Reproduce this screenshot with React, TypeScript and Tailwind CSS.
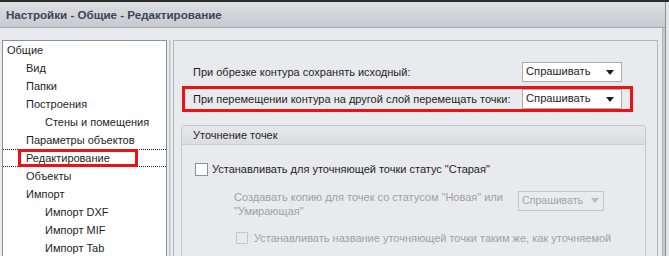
import React from "react";

const font = { fontFamily: '"Liberation Sans", Arial, sans-serif' };

function Dropdown({ disabled = false, w = 100 }: { disabled?: boolean; w?: number }) {
  return (
    <div
      className={`flex h-[20px] shrink-0 items-center justify-between border pl-[3px] ${
        disabled ? "border-[#c3c4c9] bg-[#eaebef] pr-[4px] text-[#a2a3a9]" : "border-[#abadb3] bg-white pr-[7px] text-[#1e1e1e]"
      }`}
      style={{ width: w }}
    >
      <span className={`whitespace-nowrap leading-none ${disabled ? "text-[10.6px]" : "text-[11.2px]"}`}>Спрашивать</span>
      <svg width="8" height="5" viewBox="0 0 8 5">
        <path d="M0 0H8L4 5Z" fill={disabled ? "#b9bac0" : "#1e1e1e"} />
      </svg>
    </div>
  );
}

const tree: { t: string; l: number; sel?: boolean }[] = [
  { t: "Общие", l: 0 },
  { t: "Вид", l: 1 },
  { t: "Папки", l: 1 },
  { t: "Построения", l: 1 },
  { t: "Стены и помещения", l: 2 },
  { t: "Параметры объектов", l: 1 },
  { t: "Редактирование", l: 1, sel: true },
  { t: "Объекты", l: 1 },
  { t: "Импорт", l: 1 },
  { t: "Импорт DXF", l: 2 },
  { t: "Импорт MIF", l: 2 },
  { t: "Импорт Tab", l: 2 },
];

export default function App() {
  return (
    <div className="h-[256px] w-[669px] overflow-hidden bg-[#e6e7ea] text-[#1e1e1e]" style={font}>
      <div className="h-[2px] bg-[#2c2c2c]" />
      <div className="flex h-[254px]">
        <div className="flex w-[665px] flex-col bg-[#c8c9ce]">
          <div className="flex h-[26px] shrink-0 items-center border-b border-[#a7a8ae] bg-gradient-to-b from-[#dedfe3] to-[#c8c9ce] pl-[6px]">
            <span className="whitespace-nowrap text-[11.6px] font-bold text-[#3a4556]">Настройки - Общие - Редактирование</span>
          </div>
          <div className="mr-[2px] flex flex-1 border-r border-[#b4b5ba] bg-[#e9eaee] pl-[2px] pt-[12px]">
            <div className="w-[165px] shrink-0 border border-b-0 border-[#8d8f96] bg-white">
              {tree.map((it) => (
                <div
                  key={it.t}
                  className={`relative flex h-[18px] items-center whitespace-nowrap text-[11px] ${
                    it.sel ? "border-y border-dotted border-[#222]" : ""
                  }`}
                  style={{ paddingLeft: it.l === 0 ? 4 : it.l === 1 ? 23 : 42 }}
                >
                  {it.t}
                  {it.sel && (
                    <div className="absolute left-[15px] top-[-1px] h-[18px] w-[120px] border-[3px] border-[#ee1111]" />
                  )}
                </div>
              ))}
            </div>
            <div className="mx-[2px] flex w-[2px] shrink-0 border-l border-[#c2c3c8] bg-[#d7d8dc]" />
            <div className="w-[485px] shrink-0 border border-b-0 border-[#b4b5ba] bg-[#e9eaee] pl-[8px] pt-[18px]">
              <div className="flex w-[451px] items-center justify-between border-[3px] border-transparent px-[8px]">
                <span className="whitespace-nowrap text-[11px]">При обрезке контура сохранять исходный:</span>
                <Dropdown />
              </div>
              <div className="mt-[1px] flex w-[451px] items-center justify-between border-[3px] border-[#ee1111] px-[8px]">
                <span className="whitespace-nowrap text-[11px]">При перемещении контура на другой слой перемещать точки:</span>
                <Dropdown />
              </div>
              <div className="ml-[-1px] mt-[13px] h-[200px] w-[465px] rounded-[3px] border border-[#c6c7cc]">
                <div className="flex h-[19px] items-center rounded-t-[3px] border-b border-[#cfd0d5] bg-gradient-to-b from-[#e6e7eb] to-[#dcdde1] pl-[11px] text-[11px]">
                  Уточнение точек
                </div>
                <div className="flex items-center pl-[13px] pt-[16px]">
                  <div className="h-[13px] w-[13px] shrink-0 border border-[#8f9096] bg-white" />
                  <span className="ml-[4px] whitespace-nowrap text-[11px]">Устанавливать для уточняющей точки статус "Старая"</span>
                </div>
                <div className="flex items-start pl-[52px] pt-[12px]">
                  <div className="w-[284px] whitespace-nowrap text-[11px] leading-[14px] text-[#9fa0a7]">
                    Создавать копию для точек со статусом "Новая" или
                    <br />
                    "Умирающая"
                  </div>
                  <div className="mt-[1px]">
                    <Dropdown disabled w={86} />
                  </div>
                </div>
                <div className="flex items-center pl-[54px] pt-[12px]">
                  <div className="h-[12px] w-[12px] shrink-0 border border-[#c4c5ca] bg-[#e9eaee]" />
                  <span className="ml-[6px] whitespace-nowrap text-[11px] text-[#9fa0a7]">
                    Устанавливать название уточняющей точки таким же, как уточняемой
                  </span>
                </div>
              </div>
            </div>
          </div>
        </div>
        <div className="w-[1px] bg-[#8e8f95]" />
        <div className="flex-1 bg-[#e4e5e8]" />
      </div>
    </div>
  );
}
